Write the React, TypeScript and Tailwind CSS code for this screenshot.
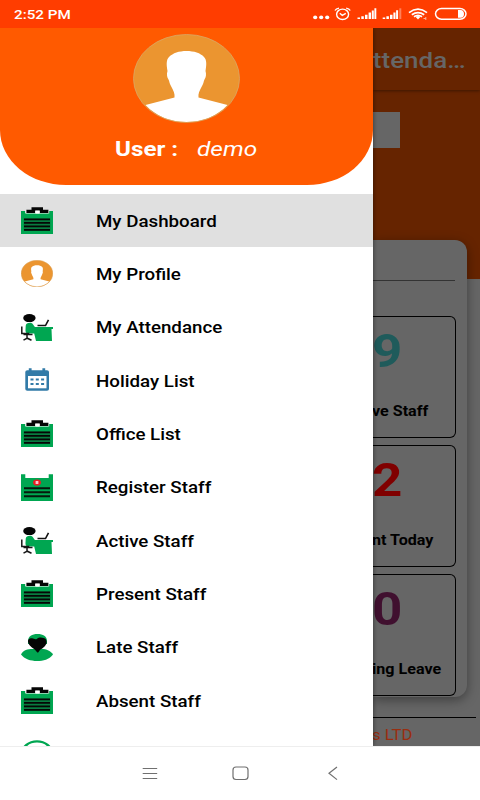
import type { ReactNode } from "react";

function ClipboardIcon() {
  return (
    <svg width="32" height="27" viewBox="0 0 32 27" className="block">
      <path d="M0 4h5v2.200h22V4h5v23H0z" fill="#00a651" />
      <path d="M4.200 3.400h24v3h-24z" fill="#fff" />
      <path d="M5.400 2.800h5.100V.3h11.500v2.500h5.400v3.100h-8.700V3.600h-4.500v2.300H5.400z" fill="#050505" />
      <path d="M14.500 3.800h4v2.800h-4z" fill="#fff" />
      <path d="M2.700 11.500h26.600v12.200H2.700z" fill="#087a3f" />
      <path d="M3 12.400h26M3 15.900h26M3 19.400h26M3 22.900h26" stroke="#050505" strokeWidth="1.700" />
    </svg>
  );
}

function RegisterIcon() {
  return (
    <svg width="32" height="27" viewBox="0 0 32 27" className="block">
      <path d="M0 .3h4.300v3.600h23.400V.3H32V27H0z" fill="#00a651" />
      <ellipse cx="16" cy="8.500" rx="4" ry="3.100" fill="#ed1c24" />
      <path d="M14.600 7h2.800v3h-2.800z" fill="#f8c9cb" />
      <path d="M3 14.200h26M3 18.200h26M3 22.300h26" stroke="#06180c" strokeWidth="2" />
    </svg>
  );
}

function AvatarIcon({ large = false }: { large?: boolean }) {
  return (
    <svg
      width={large ? 107 : 32}
      height={large ? 89 : 27}
      viewBox="0 0 107 89"
      preserveAspectRatio="none"
      className="block"
    >
      <ellipse cx="53.5" cy="44.5" rx="53" ry="44" fill="#eb9530" />
      <path
        d="M12.500 71 41.500 63.500c.5-4-1-6.500-3-10.500-2-3-2-5.500-3-7.500-1.500-2-2-5.500-1-8.500C33.500 31 33 26 36 23c4-4 10-6 17.500-6S67.500 19 71 23c3 3 2.500 8 1.500 14 1 3 .5 6.500-1 8.500-1 2-1 4.500-3 7.500-2 4-3.500 6.500-3 10.500L94.500 71C84 82 70 88 53.500 88S23 82 12.500 71z"
        fill="#fff"
      />
      <ellipse cx="53.5" cy="44.5" rx="53" ry="44" fill="none" stroke="#d9a766" strokeWidth={large ? 0.8 : 1.6} />
    </svg>
  );
}

function DeskIcon() {
  return (
    <svg width="32" height="27" viewBox="0 0 32 27" className="block">
      <ellipse cx="8.400" cy="4.100" rx="6.200" ry="4" fill="#050505" />
      <path d="M4.700 12c0-2.500 2-3.200 4.300-3.200 3 0 3 2.300 5 4.200H32v2h-1.500l.5 12H15l-1.800-7.500H8c-3 0-3.600-1.800-3.500-3.600z" fill="#00a651" />
      <path d="M16.500 11.500h8l3-5.700" fill="none" stroke="#111" strokeWidth="1.600" />
      <path d="M.8 12.500v7h7.500M6 20v5M2.500 26.200l3.800-2 4.200 2M2.500 20.500h9" fill="none" stroke="#161616" strokeWidth="1.500" />
    </svg>
  );
}

function CalendarIcon() {
  return (
    <svg width="32" height="27" viewBox="0 -1 32 27" className="block">
      <path d="M7.800 2.200V.3h2.800v1.900h10.800V.3h2.800v1.900H26q2 0 2 1.800v17q0 1.800-2 1.800H6.300q-2 0-2-1.800V4q0-1.800 2-1.800z" fill="#327ba8" />
      <path d="M7 8h18.500v12.300H7z" fill="#fff" />
      <path d="M9.500 11.500h13.800M9.500 16h13.800" stroke="#327ba8" strokeWidth="2.200" strokeDasharray="3 2.300" />
    </svg>
  );
}

function LateIcon() {
  return (
    <svg width="32" height="27" viewBox="0 0 32 27" className="block">
      <path d="M7 7c0-4.500 4-7 9.500-7S26 2.500 26 7v3H7z" fill="#00a651" />
      <path d="M0 20.500C2 16 7 15 11.500 15h9c5 0 9.500 2 11.500 5.500C28 25.500 22.500 27 16 27S3.500 25 0 20.500z" fill="#00a651" />
      <path d="M7 7.500C6.700 5 9 3.700 11 4.300c2 .3 3 1.300 4.800.6 2-1.800 4.700-1.600 6.700-.9 2.300.2 3.300 2.300 3.100 4.500-.6 4-4.300 5.700-6.600 7.500-.8 1.200-1.300 2.200-2.200 2.700-1-.5-1.800-1.500-2.600-2.700C11.500 13.500 7.700 12 7 7.500z" fill="#050505" />
    </svg>
  );
}

function RingIcon() {
  return (
    <svg width="32" height="27" viewBox="0 0 32 27" className="block">
      <ellipse cx="16" cy="13.700" rx="15" ry="12.300" fill="none" stroke="#00a651" strokeWidth="2.400" />
    </svg>
  );
}

const items: { label: string; icon: ReactNode }[] = [
  { label: "My Dashboard", icon: <ClipboardIcon /> },
  { label: "My Profile", icon: <AvatarIcon /> },
  { label: "My Attendance", icon: <DeskIcon /> },
  { label: "Holiday List", icon: <CalendarIcon /> },
  { label: "Office List", icon: <ClipboardIcon /> },
  { label: "Register Staff", icon: <RegisterIcon /> },
  { label: "Active Staff", icon: <DeskIcon /> },
  { label: "Present Staff", icon: <ClipboardIcon /> },
  { label: "Late Staff", icon: <LateIcon /> },
  { label: "Absent Staff", icon: <ClipboardIcon /> },
];

function StatusBar() {
  return (
    <header className="flex h-7 shrink-0 items-center justify-between bg-[#ff3d00] pl-[13.500px]">
      <span className="origin-left scale-x-[1.170] pt-px text-[13px] font-medium text-white">2:52 PM</span>
      <svg width="170" height="28" viewBox="310 0 170 28" className="block" fill="none" stroke="#fff">
        <g fill="#fff" stroke="none">
          <ellipse cx="315.200" cy="17.400" rx="2.100" ry="1.800" />
          <ellipse cx="321.200" cy="17.400" rx="2.100" ry="1.800" />
          <ellipse cx="327.200" cy="17.400" rx="2.100" ry="1.800" />
          <path d="M357.500 17.500h2.500V19h-2.500zM361.300 16.300h2.500V19h-2.500zM365 14.700h2.500V19H365zM368.600 12.500h2.400V19h-2.400zM371.800 10.500h2V19h-2zM374.400 8.300h1.900V19h-1.900z" />
          <path d="M382.700 17.500h2.500V19h-2.500zM386.400 16.300h2.500V19h-2.500zM390 14.700h2.500V19H390zM393.400 12.500h2.100V19h-2.100zM396.100 10.200h2V19h-2z" />
          <path d="M399.300 8.300h2V19h-2z" opacity=".35" />
          <path d="M415.500 16.800 418 19.500l2.500-2.700q-2.500-1.500-5 0z" />
          <path d="M458 10h2.500c2.500 0 3.500 1.700 3.500 4s-1 3.800-3.500 3.800H458z" />
        </g>
        <ellipse cx="342.600" cy="14.300" rx="6" ry="5.200" strokeWidth="1.400" />
        <path d="m339.800 13.300 2.500 2 3.500-2M335 10.500q1-2 4-2.400M350.200 10.500q-1-2-4-2.400" strokeWidth="1.400" />
        <path d="M409 12.700q9-7 18 0M411.800 14.800q6.200-4.500 12.400 0M414 16.800q4-3 8 0" strokeWidth="1.700" />
        <path d="M423.500 18.500h2M425.800 17v3" strokeWidth="1" opacity=".6" />
        <rect x="435.500" y="8.500" width="30.500" height="10.700" rx="6" strokeWidth="1.500" />
      </svg>
    </header>
  );
}

function Drawer() {
  return (
    <aside className="z-10 flex h-full w-[373px] shrink-0 flex-col overflow-hidden bg-white shadow-[0_0_5px_rgba(0,0,0,0.500)]">
      <div className="flex h-[157px] shrink-0 flex-col items-center bg-[#ff5a00] pt-[6px] [border-radius:0_0_66px_66px/0_0_55px_55px]">
        <AvatarIcon large />
        <div className="mt-[12px] flex h-7 w-full items-center pl-[115px] text-[20px] text-white">
          <span className="w-[82px]">
            <span className="inline-block origin-left scale-x-[1.210] whitespace-nowrap font-bold">User :</span>
          </span>
          <span className="origin-left scale-x-[1.220] italic">demo</span>
        </div>
      </div>
      <nav className="mt-[9px] flex flex-col">
        {items.map(({ label, icon }, i) => (
          <a key={label} className={`flex h-[53.330px] shrink-0 items-center pl-[21px] ${i === 0 ? "bg-[#e0e0e0]" : ""}`}>
            {icon}
            <span className="ml-[43px] origin-left scale-x-[1.170] pt-[2px] text-[16px] font-medium text-black">{label}</span>
          </a>
        ))}
        <a className="flex h-[53.330px] shrink-0 items-center pl-[21px]">
          <RingIcon />
        </a>
      </nav>
    </aside>
  );
}

function StatCard({ value, label, color }: { value: string; label: string; color: string }) {
  return (
    <div className="flex h-[122px] w-[83px] shrink-0 flex-col rounded-r-[6px] border-[1.500px] border-l-0 border-black pt-[7px]">
      <div className={`h-[54px] text-[46px] leading-[54px] font-bold ${color}`}>
        <span className="-ml-[1px] inline-block origin-left scale-x-[1.150]">{value}</span>
      </div>
      <div className="mt-[23px] text-[14px] leading-[20px] font-bold text-black">
        <span className="-ml-px inline-block origin-left scale-x-[1.150] whitespace-nowrap">{label}</span>
      </div>
    </div>
  );
}

function DimmedPage() {
  return (
    <main className="flex min-w-0 flex-1 flex-col overflow-hidden bg-[linear-gradient(#662400_251px,#666_251px)]">
      <div className="flex h-[62px] shrink-0 items-center justify-end pt-[3px] pr-[14px] text-[22px] font-medium text-[#666] shadow-[0_1px_3px_rgba(0,0,0,0.400)]">
        <span className="origin-right scale-x-[1.180]">ttenda…</span>
      </div>
      <div className="mt-[22px] h-[36px] w-[27px] shrink-0 bg-[#666]" />
      <section className="mt-[92px] flex h-[457px] w-[94px] shrink-0 flex-col rounded-r-[12px] bg-[#666] shadow-[0_3px_12px_rgba(0,0,0,0.400)]">
        <div className="mt-[40px] h-px w-[82px] shrink-0 bg-[#333]" />
        <div className="mt-[35px] flex flex-col gap-[7px]">
          <StatCard value="9" label="ve Staff" color="text-[#1f5b5b]" />
          <StatCard value="2" label="nt Today" color="text-[#800000]" />
          <StatCard value="0" label="ing Leave" color="text-[#40102f]" />
        </div>
      </section>
      <div className="mt-[20px] h-px w-[103px] shrink-0 bg-black" />
      <div className="flex h-[28px] shrink-0 items-center pt-[6px] text-[15px] text-[#992e10]">
        <span className="-ml-px origin-left scale-x-[1.110] whitespace-nowrap">s LTD</span>
      </div>
    </main>
  );
}

function NavigationBar() {
  return (
    <footer className="flex h-[54px] shrink-0 items-start justify-center border-t border-[#eee] bg-white">
      <svg width="210" height="53" viewBox="135 747 210 53" fill="none" stroke="#707070">
        <path d="M142.700 768.500h14.500M142.700 773.500h14.500M142.700 778.500h14.500" />
        <rect x="233" y="767" width="15" height="12.500" rx="3" strokeWidth="1.200" />
        <path d="m337 767-8 6.300 8 6.300" strokeWidth="1.200" />
      </svg>
    </footer>
  );
}

export default function App() {
  return (
    <div className="flex h-[800px] w-[480px] flex-col overflow-hidden bg-white font-[Roboto,sans-serif]">
      <StatusBar />
      <div className="flex h-[718px] shrink-0 overflow-hidden">
        <Drawer />
        <DimmedPage />
      </div>
      <NavigationBar />
    </div>
  );
}
